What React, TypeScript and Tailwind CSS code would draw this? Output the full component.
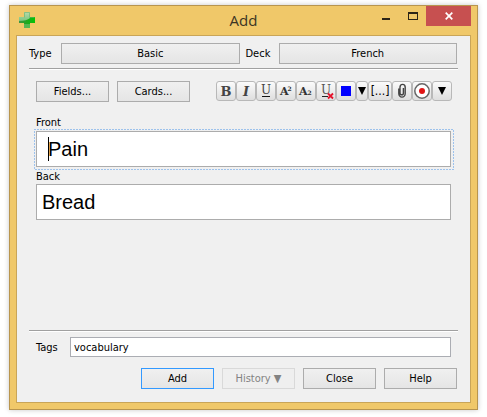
import type { ReactNode } from "react";

const face = "border border-[#acacac] bg-linear-to-b from-[#f0f0f0] to-[#e5e5e5]";

function PushButton({ children, className = "" }: { children: ReactNode; className?: string }) {
  return (
    <button type="button" className={`h-[21px] ${face} text-center leading-[19px] ${className}`}>
      {children}
    </button>
  );
}

function ToolButton({ label, children, className = "w-5" }: { label: string; children: ReactNode; className?: string }) {
  return (
    <button
      type="button"
      aria-label={label}
      className={`flex h-5 shrink-0 items-center justify-center rounded-[3px] border border-[#b8b8b8] bg-linear-to-b from-[#fbfbfb] to-[#dedede] ${className}`}
    >
      {children}
    </button>
  );
}

function Glyph({ children }: { children: ReactNode }) {
  return (
    <svg viewBox="0 0 18 18" className="h-[18px] w-[18px] shrink-0" aria-hidden="true">
      {children}
    </svg>
  );
}

function DownArrow() {
  return (
    <svg viewBox="0 0 8 8" className="h-2 w-2 shrink-0" aria-hidden="true">
      <path d="M0 0h8L4 8z" fill="#000" />
    </svg>
  );
}

function Divider() {
  return <div className="h-[2px] border-t border-[#a0a0a0] bg-white" />;
}

const serif = "DejaVu Serif, serif";

function Toolbar() {
  return (
    <div className="-mr-px flex">
      <ToolButton label="Bold">
        <Glyph>
          <text x="9" y="14" textAnchor="middle" fontFamily={serif} fontWeight="700" fontSize="13" fill="#444">B</text>
        </Glyph>
      </ToolButton>
      <ToolButton label="Italic">
        <Glyph>
          <text x="9" y="14" textAnchor="middle" fontFamily={serif} fontWeight="700" fontStyle="italic" fontSize="13" fill="#444">I</text>
        </Glyph>
      </ToolButton>
      <ToolButton label="Underline">
        <Glyph>
          <text x="9" y="12" textAnchor="middle" fontFamily={serif} fontSize="12" fill="#444">U</text>
          <path d="M5 14.5h8" stroke="#111" />
        </Glyph>
      </ToolButton>
      <ToolButton label="Superscript">
        <Glyph>
          <text x="3" y="13" fontFamily={serif} fontWeight="700" fontSize="11" fill="#333">A</text>
          <text x="10.5" y="9" fontFamily={serif} fontWeight="700" fontSize="6" fill="#333">2</text>
        </Glyph>
      </ToolButton>
      <ToolButton label="Subscript">
        <Glyph>
          <text x="2" y="13" fontFamily={serif} fontWeight="700" fontSize="11" fill="#333">A</text>
          <text x="10.5" y="13" fontFamily={serif} fontWeight="700" fontSize="6" fill="#333">2</text>
        </Glyph>
      </ToolButton>
      <ToolButton label="Remove formatting">
        <Glyph>
          <text x="9" y="12" textAnchor="middle" fontFamily={serif} fontSize="12" fill="#555">U</text>
          <path d="M5 14.5h6" stroke="#222" />
          <path d="M11 11.5l5 5M16 11.5l-5 5" stroke="#e5132b" strokeWidth="1.8" />
        </Glyph>
      </ToolButton>
      <ToolButton label="Text colour">
        <span className="h-[10px] w-[10px] bg-[#0000ff]" />
      </ToolButton>
      <ToolButton label="Choose colour" className="w-3">
        <DownArrow />
      </ToolButton>
      <ToolButton label="Cloze" className="w-6">
        <span className="text-[12px]">[...]</span>
      </ToolButton>
      <ToolButton label="Attach file">
        <Glyph>
          <path d="M5.8 6.5v5a3.2 3.6 0 0 0 6.4 0V5.3a2.6 2.9 0 0 0-5.2 0v5.6a1.7 1.9 0 0 0 3.4 0V6" fill="none" stroke="#444" strokeWidth="1.4" />
        </Glyph>
      </ToolButton>
      <ToolButton label="Record audio">
        <Glyph>
          <circle cx="9" cy="9" r="7.2" fill="#fff" stroke="#666" strokeWidth="1.5" />
          <circle cx="9" cy="9" r="3" fill="#e01414" />
        </Glyph>
      </ToolButton>
      <ToolButton label="More">
        <DownArrow />
      </ToolButton>
    </div>
  );
}

function TitleBar() {
  return (
    <header className="grid h-[29px] grid-cols-[1fr_auto_1fr] items-start">
      <svg viewBox="0 0 16 16" className="mt-[6px] ml-[3px] h-4 w-4" aria-hidden="true">
        <defs>
          <linearGradient id="plus-light" x1="0" y1="0" x2="0" y2="1">
            <stop offset="0" stopColor="#b5dcae" />
            <stop offset="1" stopColor="#7cc47c" />
          </linearGradient>
          <linearGradient id="plus-dark" x1="0" y1="0" x2="1" y2="0">
            <stop offset="0" stopColor="#3f9440" />
            <stop offset="0.5" stopColor="#1fa81f" />
            <stop offset="1" stopColor="#04c404" />
          </linearGradient>
        </defs>
        <path d="M5 0h6v5h5v6h-5v5H5v-5H0V5h5z" fill="url(#plus-dark)" />
        <path d="M5 0h6v6C9 8 5 9 0 9V5h5z" fill="url(#plus-light)" />
        <path d="M5 12h6v4H5z" fill="#6dbd68" fillOpacity="0.7" />
        <path d="M5.5 5.5V.5h5v5h5" fill="none" stroke="#6bb06a" strokeOpacity="0.6" />
      </svg>
      <h1 className="pt-[2px] font-['Open_Sans',sans-serif] text-[15px] leading-6 text-[#3b3424]">Add</h1>
      <div className="flex justify-end">
        <button type="button" aria-label="Minimize" className="flex h-5 w-[27px] items-center justify-center">
          <svg viewBox="0 0 8 10" className="h-[10px] w-2" aria-hidden="true">
            <path d="M0 7h8v2H0z" fill="#2c2517" />
          </svg>
        </button>
        <button type="button" aria-label="Maximize" className="flex h-5 w-[27px] items-center justify-center">
          <svg viewBox="0 0 10 8" className="h-2 w-[10px]" aria-hidden="true">
            <path d="M0 0h10v8H0zM1 2v5h8V2z" fill="#2c2517" fillRule="evenodd" />
          </svg>
        </button>
        <button type="button" aria-label="Close window" className="flex h-5 w-[45px] items-center justify-center bg-[#c75050]">
          <svg viewBox="0 0 8 8" className="h-2 w-2" aria-hidden="true">
            <path d="M.7.7l6.6 6.6M7.3.7L.7 7.3" stroke="#fff" strokeWidth="1.7" />
          </svg>
        </button>
      </div>
    </header>
  );
}

export default function App() {
  return (
    <div className="min-h-screen bg-white pt-[5px] pr-[9px] pb-[7px] pl-[9px] font-['DejaVu_Sans_Condensed','DejaVu_Sans',sans-serif] text-[11px] leading-[13px] text-black">
      <div className="border border-[#b8954e] bg-[#f0c869] px-[6px] pb-[6px] shadow-[0_0_5px_rgba(0,0,0,0.22)]">
        <TitleBar />
        <main className="border border-[#c9a558] bg-[#f0f0f0] px-3 pt-[7px] pb-[13px]">
          <div className="mr-px mb-1 flex items-center">
            <span className="w-8">Type</span>
            <PushButton className="flex-1">Basic</PushButton>
            <span className="w-[39px] pl-[6px]">Deck</span>
            <PushButton className="flex-1">French</PushButton>
          </div>
          <Divider />

          <section className="min-h-[260px] px-[7px] pt-[11px]">
            <div className="mb-[14px] flex items-start justify-between">
              <div className="flex gap-2">
                <PushButton className="w-[73px]">Fields...</PushButton>
                <PushButton className="w-[73px]">Cards...</PushButton>
              </div>
              <Toolbar />
            </div>

            <label htmlFor="front" className="block">Front</label>
            <div className="relative mt-[2px]">
              <input
                id="front"
                defaultValue="Pain"
                className="block h-9 w-full border border-[#acacac] bg-white pl-[11px] font-['Liberation_Sans',Arial,sans-serif] text-[20px] outline-none"
              />
              <span className="pointer-events-none absolute -inset-[2px]">
                <svg className="block h-full w-full overflow-visible" aria-hidden="true">
                  <rect x="0.5" y="0.5" width="100%" height="100%" fill="none" stroke="#4a94e8" strokeDasharray="1 2" />
                </svg>
              </span>
              <span className="pointer-events-none absolute top-[6px] left-3 h-6 w-px bg-black" />
            </div>

            <label htmlFor="back" className="mt-[3px] block">Back</label>
            <input
              id="back"
              defaultValue="Bread"
              className="mt-px block h-9 w-full border border-[#acacac] bg-white pl-[5px] font-['Liberation_Sans',Arial,sans-serif] text-[20px] outline-none"
            />
          </section>

          <Divider />
          <div className="mt-[5px] mr-[7px] ml-[7px] flex items-center">
            <label htmlFor="tags" className="w-[34px]">Tags</label>
            <input
              id="tags"
              defaultValue="vocabulary"
              className="h-5 min-w-0 flex-1 border border-[#abadb3] bg-white pt-px pl-[3px] outline-none"
            />
          </div>
          <div className="mt-[11px] mr-px flex justify-end gap-2">
            <button type="button" className="h-[21px] w-[73px] border border-[#3399ff] bg-linear-to-b from-[#f0f0f0] to-[#e5e5e5] leading-[19px]">
              Add
            </button>
            <button type="button" disabled className="h-[21px] w-[73px] border border-[#d9d9d9] bg-[#efefef] leading-[19px] text-[#838383]">
              History ▼
            </button>
            <PushButton className="w-[73px]">Close</PushButton>
            <PushButton className="w-[73px]">Help</PushButton>
          </div>
        </main>
      </div>
    </div>
  );
}
